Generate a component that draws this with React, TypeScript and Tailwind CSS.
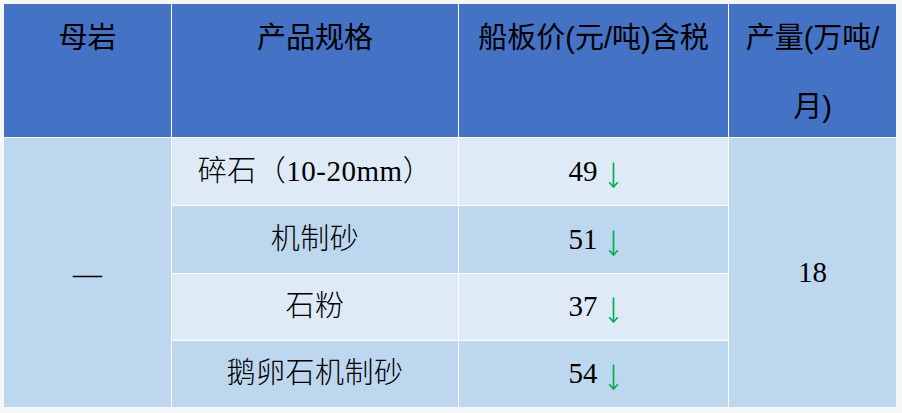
import React from 'react';

const SANS = "font-['Liberation_Sans','Noto_Sans_CJK_SC',sans-serif]";
const SERIF = "font-['Liberation_Serif','Noto_Sans_CJK_SC',serif]";

// row placement classes are written out in full so Tailwind picks them up
const ROWS = [
  { name: '碎石（10-20mm）', price: 49, bg: 'bg-[#deebf7]', row: 'row-start-2' },
  { name: '机制砂', price: 51, bg: 'bg-[#bdd7ee]', row: 'row-start-3' },
  { name: '石粉', price: 37, bg: 'bg-[#deebf7]', row: 'row-start-4' },
  { name: '鹅卵石机制砂', price: 54, bg: 'bg-[#bdd7ee]', row: 'row-start-5' },
];

function DownArrow() {
  return (
    <svg width="11" height="26" viewBox="0 0 11 26" className="ml-[10px] mt-[6px] shrink-0" aria-hidden>
      <path d="M5.5 0.5V25" stroke="#00b050" strokeWidth="1.7" fill="none" />
      <path d="M1.2 20.2L5.5 25L9.8 20.2" stroke="#00b050" strokeWidth="1.7" fill="none" />
    </svg>
  );
}

export default function App() {
  return (
    <div className="h-[413px] w-[902px] bg-[#f6f8f8] p-[4px]">
      <div className="grid w-[892px] grid-cols-[167px_286px_269px_167px] grid-rows-[133px_67px_67px_66px_66px] gap-px bg-white text-[29px] text-black">
        {['母岩', '产品规格', '船板价(元/吨)含税', '产量(万吨/月)'].map((h) => (
          <div key={h} className={`bg-[#4472c4] px-[8px] text-center leading-[69px] ${SANS}`}>
            {h}
          </div>
        ))}

        <div className={`col-start-1 row-span-4 row-start-2 flex items-center justify-center bg-[#bdd7ee] pt-[4px] ${SERIF}`}>
          —
        </div>

        {ROWS.map((r) => (
          <React.Fragment key={r.name}>
            <div className={`col-start-2 ${r.row} flex items-center justify-center font-light tracking-[0.5px] ${r.bg} ${SERIF}`}>
              {r.name}
            </div>
            <div className={`col-start-3 ${r.row} flex items-center justify-center ${r.bg} ${SERIF}`}>
              <span>{r.price}</span>
              <DownArrow />
            </div>
          </React.Fragment>
        ))}

        <div className={`col-start-4 row-span-4 row-start-2 flex items-center justify-center bg-[#bdd7ee] ${SERIF}`}>
          18
        </div>
      </div>
    </div>
  );
}
